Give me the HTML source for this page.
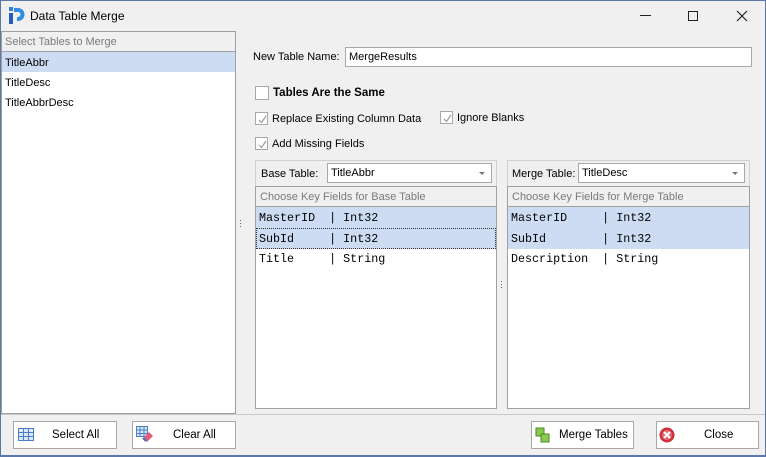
<!DOCTYPE html>
<html><head><style>
*{margin:0;padding:0;box-sizing:border-box}
body{width:766px;height:457px;background:#f0f0f0;font-family:"Liberation Sans",sans-serif;font-size:11px;color:#000;position:relative;overflow:hidden}
.a{position:absolute}
.box{position:absolute;background:#fff;border:1px solid #a0a0a0}
.hdr{position:absolute;background:#f0f0f0;border-bottom:1px solid #a0a0a0;color:#7a7a7a;padding-left:4px;line-height:19px}
.mono{font-family:"Liberation Mono",monospace;font-size:11.7px;white-space:pre;line-height:20px;padding-left:3px;padding-top:1px}
.sel{background:#cddcf3}
.cb{position:absolute;width:13px;height:13px;border:1px solid #a8a8a8;background:#fff}
.cb svg{position:absolute;left:1px;top:1px}
.btn{position:absolute;height:28px;border:1px solid #a8a8a8;background:#fff;line-height:26px;font-size:11.5px}
.combo{position:absolute;background:#fff;border:1px solid #a8a8a8;height:20px;line-height:18px;padding-left:3px}
.combo:after{content:"";position:absolute;right:6px;top:8px;border:3px solid transparent;border-top:3px solid #777}
</style></head><body>
<div class="a" style="left:0;top:0;width:766px;height:1px;background:#5b78a8"></div>
<div class="a" style="left:765px;top:0;width:1px;height:457px;background:#5b78a8"></div>
<div class="a" style="left:0;top:0;width:1px;height:457px;background:#5b78a8"></div>
<div class="a" style="left:0;top:455px;width:766px;height:2px;background:#5b78a8"></div>
<svg class="a" style="left:9px;top:7px" width="16" height="17" viewBox="0 0 16 17"><rect x="0" y="0" width="4" height="4" fill="#2f7fd6"/><rect x="0" y="6" width="4" height="11" fill="#1e5fb8"/><path d="M5 1h4a6 6 0 0 1 0 13H8v-4h1a2 2 0 0 0 0-5H5z" fill="#2f8fe6"/></svg>
<div class="a" style="left:30px;top:9px;font-size:12px">Data Table Merge</div>
<div class="a" style="left:640px;top:15px;width:11px;height:1px;background:#222"></div>
<div class="a" style="left:688px;top:11px;width:10px;height:10px;border:1px solid #222"></div>
<svg class="a" style="left:736px;top:10px" width="12" height="12"><path d="M1 1L11 11M11 1L1 11" stroke="#222" stroke-width="1.2"/></svg>
<div class="box" style="left:1px;top:31px;width:235px;height:383px">
<div class="hdr" style="left:0;top:0;width:233px;height:20px;padding-left:3px;padding-top:1px">Select Tables to Merge</div>
<div class="a sel" style="left:0;top:20px;width:233px;height:20px;line-height:20px;padding-left:3px;padding-top:1px">TitleAbbr</div>
<div class="a" style="left:3px;top:41px;line-height:20px">TitleDesc</div>
<div class="a" style="left:3px;top:61px;line-height:20px">TitleAbbrDesc</div>
</div>
<div class="a" style="left:239px;top:219px;font-size:9px;line-height:3px;color:#555">·<br>·<br>·</div>
<div class="a" style="left:500px;top:280px;font-size:9px;line-height:3px;color:#555">·<br>·<br>·</div>
<div class="a" style="left:253px;top:51px">New Table Name:</div>
<div class="a" style="left:345px;top:47px;width:407px;height:20px;background:#fff;border:1px solid #a8a8a8;padding-left:3px;line-height:18px">MergeResults</div>
<div class="cb" style="left:255px;top:86px;width:14px;height:14px"></div>
<div class="a" style="left:273px;top:87px;font-weight:bold;font-size:11.5px">Tables Are the Same</div>
<div class="cb" style="left:255px;top:112px"><svg width="11" height="11"><path d="M2 6l2.5 2.5L9 2" stroke="#999" fill="none" stroke-width="1.2"/></svg></div>
<div class="a" style="left:272px;top:113px">Replace Existing Column Data</div>
<div class="cb" style="left:440px;top:111px"><svg width="11" height="11"><path d="M2 6l2.5 2.5L9 2" stroke="#999" fill="none" stroke-width="1.2"/></svg></div>
<div class="a" style="left:457px;top:112px">Ignore Blanks</div>
<div class="cb" style="left:255px;top:137px"><svg width="11" height="11"><path d="M2 6l2.5 2.5L9 2" stroke="#999" fill="none" stroke-width="1.2"/></svg></div>
<div class="a" style="left:272px;top:138px">Add Missing Fields</div>
<div class="a" style="left:255px;top:160px;width:242px;height:27px;border:1px solid #d0d0d0;border-bottom:none"></div>
<div class="a" style="left:261px;top:168px">Base Table:</div>
<div class="combo" style="left:327px;top:163px;width:165px">TitleAbbr</div>
<div class="box" style="left:255px;top:186px;width:242px;height:223px">
<div class="hdr" style="left:0;top:0;width:240px;height:20px;padding-top:1px">Choose Key Fields for Base Table</div>
<div class="a mono sel" style="left:0;top:20px;width:240px">MasterID  | Int32</div>
<div class="a mono sel" style="left:0;top:41px;width:240px;outline:1px dotted #333;outline-offset:-1px">SubId     | Int32</div>
<div class="a mono" style="left:0;top:61px">Title     | String</div>
</div>
<div class="a" style="left:507px;top:160px;width:243px;height:27px;border:1px solid #d0d0d0;border-bottom:none"></div>
<div class="a" style="left:512px;top:168px">Merge Table:</div>
<div class="combo" style="left:578px;top:163px;width:167px">TitleDesc</div>
<div class="box" style="left:507px;top:186px;width:243px;height:223px">
<div class="hdr" style="left:0;top:0;width:241px;height:20px;padding-top:1px">Choose Key Fields for Merge Table</div>
<div class="a mono sel" style="left:0;top:20px;width:241px">MasterID     | Int32</div>
<div class="a mono sel" style="left:0;top:41px;width:241px">SubId        | Int32</div>
<div class="a mono" style="left:0;top:61px">Description  | String</div>
</div>
<div class="a" style="left:1px;top:414px;width:764px;height:1px;background:#c8c8c8"></div>
<div class="btn" style="left:13px;top:421px;width:104px"><svg class="a" style="left:4px;top:6px" width="16" height="13"><rect x="0.5" y="0.5" width="15" height="12" fill="#dbe8f8" stroke="#4a7fc8"/><path d="M0 4.5h16M0 8.5h16M5.5 0v13M10.5 0v13" stroke="#4a7fc8"/></svg><span class="a" style="left:38px">Select All</span></div>
<div class="btn" style="left:132px;top:421px;width:104px"><svg class="a" style="left:3px;top:4px" width="18" height="17"><rect x="0.5" y="0.5" width="11" height="10" fill="#dbe8f8" stroke="#4a7fc8"/><path d="M0 4h12M0 7.5h12M4 0v11M8 0v11" stroke="#4a7fc8"/><path d="M7 12l6-6 4 4-6 6z" fill="#e0607a"/><path d="M7 12l3 3" stroke="#4070c0" stroke-width="2"/></svg><span class="a" style="left:40px">Clear All</span></div>
<div class="btn" style="left:531px;top:421px;width:103px"><svg class="a" style="left:3px;top:5px" width="16" height="17"><rect x="1" y="1" width="8" height="8" fill="#8cc850" stroke="#4a8a20"/><rect x="6" y="7" width="8" height="8" fill="#8cc850" stroke="#4a8a20"/></svg><span class="a" style="left:27px">Merge Tables</span></div>
<div class="btn" style="left:656px;top:421px;width:103px"><svg class="a" style="left:2px;top:5px" width="16" height="16"><circle cx="8" cy="8" r="7.5" fill="#d0303a"/><circle cx="8" cy="8" r="5" fill="#fff" opacity=".3"/><path d="M5 5l6 6M11 5l-6 6" stroke="#fff" stroke-width="2"/></svg><span class="a" style="left:47px">Close</span></div>
</body></html>
